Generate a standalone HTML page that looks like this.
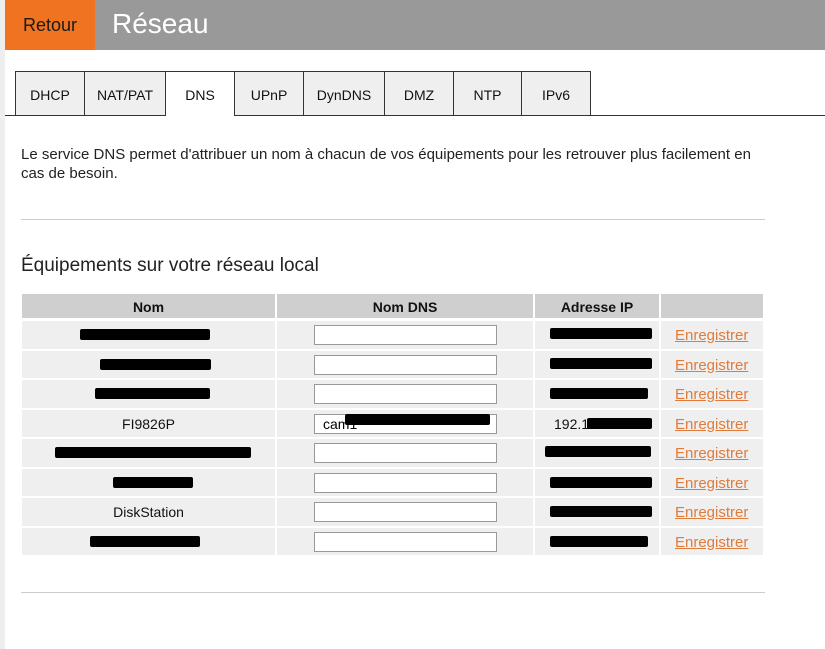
<!DOCTYPE html>
<html><head><meta charset="utf-8"><style>
body{margin:0;width:825px;height:649px;background:#fff;font-family:"Liberation Sans",Arial,sans-serif;position:relative;overflow:hidden}
.a{position:absolute}
.tab{position:absolute;top:71px;height:44px;background:#efefef;border:1px solid #333;border-bottom:none;box-sizing:border-box;font-size:14px;color:#111;text-align:center;line-height:46px}
.hd{position:absolute;top:294px;height:24px;background:#cfcfcf;font-weight:bold;font-size:14px;text-align:center;line-height:26px;color:#111}
.c{position:absolute;height:27.5px;background:#efefef;font-size:14px;text-align:center;color:#111}
.in{position:absolute;left:314px;width:183px;height:20px;border:1px solid #999;box-sizing:border-box;background:#fff;font-size:14px;line-height:19px;padding-left:8px}
.lk{position:absolute;left:675px;font-size:15px;color:#e07b3a;text-decoration:underline}
.k{position:absolute;background:#000;height:11px;border-radius:2px}
</style></head><body>
<div class="a" style="left:0;top:0;width:5px;height:649px;background:#eee"></div>
<div class="a" style="left:5px;top:0;width:820px;height:50px;background:#999"></div>
<div class="a" style="left:5px;top:0;width:90px;height:50px;background:#ef7320;font-size:18px;line-height:50px;text-align:center;color:#1a1a1a">Retour</div>
<div class="a" style="left:112px;top:8px;font-size:28px;color:#fff">Réseau</div>
<div class="a" style="left:5px;top:115px;width:820px;height:1px;background:#333"></div>
<div class="tab" style="left:15px;width:70px">DHCP</div>
<div class="tab" style="left:84px;width:82px">NAT/PAT</div>
<div class="tab" style="left:165px;width:70px;background:#fff;height:45px">DNS</div>
<div class="tab" style="left:234px;width:70px">UPnP</div>
<div class="tab" style="left:303px;width:82px">DynDNS</div>
<div class="tab" style="left:384px;width:70px">DMZ</div>
<div class="tab" style="left:453px;width:69px">NTP</div>
<div class="tab" style="left:521px;width:70px">IPv6</div>
<div class="a" style="left:21px;top:145px;width:800px;font-size:15px;line-height:19px;color:#222">Le service DNS permet d'attribuer un nom à chacun de vos équipements pour les retrouver plus facilement en<br>cas de besoin.</div>
<div class="a" style="left:21px;top:219px;width:744px;height:1px;background:#ccc"></div>
<div class="a" style="left:21px;top:255px;font-size:19px;color:#222">Équipements sur votre réseau local</div>
<div class="hd" style="left:22px;width:253px">Nom</div>
<div class="hd" style="left:277px;width:256px">Nom DNS</div>
<div class="hd" style="left:535px;width:124px">Adresse IP</div>
<div class="hd" style="left:661px;width:102px"></div>
<div id="rows"></div>
<script>
var names=["","","","FI9826P","","","DiskStation",""];
var h="";
for(var i=0;i<8;i++){var t=321+i*29.5;
h+='<div class="c" style="left:22px;width:253px;top:'+t+'px;line-height:28px">'+names[i]+'</div>';
h+='<div class="c" style="left:277px;width:256px;top:'+t+'px"></div>';
h+='<div class="c" style="left:535px;width:124px;top:'+t+'px;line-height:28px;text-align:left;padding-left:19px;box-sizing:border-box">'+(i==3?'192.1':'')+'</div>';
h+='<div class="c" style="left:661px;width:102px;top:'+t+'px"></div>';
h+='<div class="in" style="top:'+(t+4)+'px">'+(i==3?'cam1':'')+'</div>';
h+='<div class="lk" style="top:'+(t+6)+'px">Enregistrer</div>';}
document.getElementById('rows').innerHTML=h;
</script>
<div class="k" style="left:80px;top:329px;width:130px"></div>
<div class="k" style="left:550px;top:328px;width:102px"></div>
<div class="k" style="left:100px;top:359px;width:111px"></div>
<div class="k" style="left:550px;top:358px;width:102px"></div>
<div class="k" style="left:95px;top:388px;width:115px"></div>
<div class="k" style="left:550px;top:388px;width:98px"></div>
<div class="k" style="left:345px;top:414px;width:145px"></div>
<div class="k" style="left:587px;top:418px;width:65px"></div>
<div class="k" style="left:55px;top:447px;width:196px"></div>
<div class="k" style="left:545px;top:446px;width:106px"></div>
<div class="k" style="left:113px;top:477px;width:80px"></div>
<div class="k" style="left:550px;top:477px;width:102px"></div>
<div class="k" style="left:550px;top:506px;width:102px"></div>
<div class="k" style="left:90px;top:536px;width:110px"></div>
<div class="k" style="left:550px;top:536px;width:98px"></div>
<div class="a" style="left:21px;top:592px;width:744px;height:1px;background:#ccc"></div>
</body></html>
